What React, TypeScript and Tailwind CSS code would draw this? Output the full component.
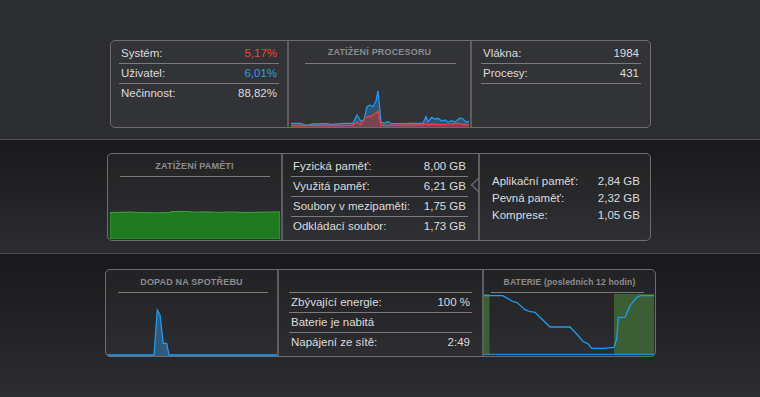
import type { ReactNode } from "react";

type RowData = { label: string; value?: string; tone?: string };

const cpuBlue: [number, number][] = [
  [0, 34.3], [9, 34.3], [15.7, 36.3], [22, 35], [35.7, 34.7], [41, 35.3], [52, 34.3], [62, 34.3],
  [66, 26], [69.7, 32], [73, 31], [76, 17.7], [79, 16], [82, 17.7], [85, 12], [87, 2], [90, 33],
  [93, 34.3], [96.7, 32.7], [100, 34.3], [109, 34.7], [122, 34.3], [132, 34.3], [135, 27.7],
  [137, 33], [140.7, 28.3], [144, 30], [147, 29.3], [150.7, 32], [154, 31], [157, 33], [160.7, 31.7],
  [164, 33], [169, 29], [172, 30], [175, 33], [178, 32.3],
];

const cpuRed: [number, number][] = [
  [0, 36.5], [30, 36.5], [62, 36.3], [66, 33], [69.7, 35.7], [74, 28.7], [80.7, 27], [87, 22.3],
  [90, 36.3], [132, 36], [135, 34.3], [137, 36], [140.7, 35], [150, 35.7], [169, 34.3], [172, 35.5],
  [178, 35.5],
];

const memTop: [number, number][] = [
  [0, 1.5], [12, 1.3], [20, 1], [30, 1.6], [45, 1.8], [58, 1.7], [62, 0.6], [75, 0.4], [85, 1.2],
  [95, 0.8], [110, 1.4], [120, 0.9], [135, 1.6], [150, 1.2], [170, 0.9],
];

const power: [number, number][] = [
  [0, 59], [47, 59], [50.3, 14], [53, 19], [56.3, 47.3], [59.7, 47.3], [62, 59], [170, 59],
];

const battery: [number, number][] = [
  [0, 1.7], [18.7, 1.7], [29.3, 7.7], [32.7, 8.3], [41, 15.7], [45.3, 17.3], [51, 18.3], [56, 23.3],
  [66, 33], [86, 33], [92.7, 40], [99.3, 47.7], [104.3, 50], [107.7, 54.3], [119.3, 54.3],
  [130, 53.3], [132.7, 45], [134.3, 23.3], [141, 23.3], [146, 11.7], [152.7, 3.3], [156.7, 1.7],
  [170, 1.7],
];

const pts = (p: [number, number][]) => p.map(([x, y]) => `${x},${y}`).join(" ");
const area = (p: [number, number][], base: number) =>
  `M${p[0][0]},${base} L${pts(p).replace(/ /g, " L")} L${p[p.length - 1][0]},${base} Z`;

function Row({ label, value, tone, last }: RowData & { last?: boolean }) {
  return (
    <div
      className={`flex h-[20px] items-center justify-between ${last ? "" : "border-b border-[#7b7b7e]"}`}
    >
      <span className="pl-[2px]">{label}</span>
      {value && <span className={`pr-[2px] ${tone ?? ""}`}>{value}</span>}
    </div>
  );
}

function Title({ children, small }: { children: ReactNode; small?: boolean }) {
  return (
    <div
      className={`text-center font-bold leading-[10px] text-[#8c8c8f] ${
        small ? "text-[8.5px] tracking-[0.02em]" : "text-[9px] tracking-[0.02em]"
      }`}
    >
      {children}
    </div>
  );
}

function Divider() {
  return <div className="w-[2px] shrink-0 bg-[#5e5e61]" />;
}

function Panel({ className, children }: { className: string; children: ReactNode }) {
  return (
    <div
      className={`flex h-[88px] overflow-hidden rounded-[5px] border border-[#6d6d70] bg-white/[0.03] ${className}`}
    >
      {children}
    </div>
  );
}

export default function App() {
  return (
    <div className="flex h-[397px] w-[760px] flex-col overflow-hidden bg-[#2c2d31] font-[family-name:'Liberation_Sans',Arial,sans-serif] text-[11.5px] text-[#dcdcdc]">
      {/* CPU */}
      <section className="h-[140px] shrink-0 border-b border-[#505055] bg-[#2c2d31] pt-[40px]">
        <Panel className="ml-[110px] w-[541px]">
          <div className="w-[176px] shrink-0 px-[8px] pt-[3px]">
            <Row label="Systém:" value="5,17%" tone="text-[#f0443a]" />
            <Row label="Uživatel:" value="6,01%" tone="text-[#2a9ef0]" />
            <Row label="Nečinnost:" value="88,82%" last />
          </div>
          <Divider />
          <div className="flex w-[181px] shrink-0 flex-col pt-[6px]">
            <Title>ZATÍŽENÍ PROCESORU</Title>
            <div className="ml-[16px] mr-[14px] mt-[6px] h-px bg-[#7b7b7e]" />
            <svg className="mt-auto ml-[2px]" width="178" height="38" viewBox="0 0 178 38">
              <path d={area(cpuBlue, 38)} fill="#2f5a7c" fillOpacity="0.9" />
              <path d={area(cpuRed, 38)} fill="#7c4352" />
              <polyline points={pts(cpuBlue)} fill="none" stroke="#1f9bf0" strokeWidth="1.3" />
              <polyline points={pts(cpuRed)} fill="none" stroke="#f0403a" strokeWidth="1.3" />
            </svg>
          </div>
          <Divider />
          <div className="flex-1 px-[9px] pt-[3px]">
            <Row label="Vlákna:" value="1984" />
            <Row label="Procesy:" value="431" />
          </div>
        </Panel>
      </section>

      {/* Memory */}
      <section className="h-[114px] shrink-0 border-b border-[#505055] bg-gradient-to-b from-[#19191b] to-[#2c2d31] pt-[13px]">
        <Panel className="ml-[107px] w-[544px]">
          <div className="flex w-[173px] shrink-0 flex-col pt-[7px]">
            <Title>ZATÍŽENÍ PAMĚTI</Title>
            <div className="ml-[12px] mr-[11px] mt-[5px] h-px bg-[#7b7b7e]" />
            <svg className="mb-px ml-[2px] mt-auto" width="170" height="28" viewBox="0 0 170 28">
              <path d={area(memTop, 28)} fill="#1f7a1f" stroke="#3aa53a" strokeWidth="1" />
            </svg>
          </div>
          <Divider />
          <div className="w-[195px] shrink-0 pl-[6px] pr-[10px] pt-[3px]">
            <div className="pl-[2px]">
              <Row label="Fyzická paměť:" value="8,00 GB" />
              <Row label="Využitá paměť:" value="6,21 GB" />
              <Row label="Soubory v mezipaměti:" value="1,75 GB" />
              <Row label="Odkládací soubor:" value="1,73 GB" last />
            </div>
          </div>
          <div className="relative w-[2px] shrink-0 bg-[#5e5e61]">
            <svg className="absolute left-[-8px] top-[24px]" width="10" height="14" viewBox="0 0 10 14">
              <polyline points="8.5,0.5 1.5,7 8.5,13.5" fill="none" stroke="#66666a" strokeWidth="1.5" />
            </svg>
          </div>
          <div className="flex flex-1 flex-col justify-center pl-[12px] pr-[10px] pt-[2px] leading-[17px]">
            <div className="flex justify-between">
              <span>Aplikační paměť:</span>
              <span>2,84 GB</span>
            </div>
            <div className="flex justify-between">
              <span>Pevná paměť:</span>
              <span>2,32 GB</span>
            </div>
            <div className="flex justify-between">
              <span>Komprese:</span>
              <span>1,05 GB</span>
            </div>
          </div>
        </Panel>
      </section>

      {/* Energy */}
      <section className="flex-1 bg-gradient-to-b from-[#19191b] to-[#2c2d31] pt-[15px]">
        <Panel className="ml-[105px] w-[551px]">
          <div className="flex w-[171px] shrink-0 flex-col pt-[7px]">
            <Title>DOPAD NA SPOTŘEBU</Title>
            <div className="ml-[12px] mr-[9px] mt-[5px] h-px bg-[#7b7b7e]" />
            <svg className="ml-px mt-auto" width="170" height="60" viewBox="0 0 170 60">
              <path d={area(power, 60)} fill="#2f5a7c" />
              <polyline points={pts(power)} fill="none" stroke="#1f9bf0" strokeWidth="1.3" />
            </svg>
          </div>
          <Divider />
          <div className="w-[203px] shrink-0 px-[10px] pt-[22px]">
            <div className="border-t border-[#7b7b7e]">
              <Row label="Zbývající energie:" value="100 %" />
              <Row label="Baterie je nabitá" />
              <Row label="Napájení ze sítě:" value="2:49" last />
            </div>
          </div>
          <Divider />
          <div className="flex flex-1 flex-col pt-[7px]">
            <Title small>BATERIE (posledních 12 hodin)</Title>
            <div className="ml-[7px] mr-[11px] mt-[5px] h-px bg-[#7b7b7e]" />
            <svg className="mt-[1px]" width="170" height="61" viewBox="0 0 170 61">
              <rect x="0" y="0" width="5.5" height="61" fill="#3b5e34" />
              <rect x="130" y="0" width="40" height="61" fill="#3b5e34" />
              <line x1="0" y1="60.3" x2="170" y2="60.3" stroke="#1f9bf0" strokeWidth="1" />
              <polyline points={pts(battery)} fill="none" stroke="#1f9bf0" strokeWidth="1.3" />
            </svg>
          </div>
        </Panel>
      </section>
    </div>
  );
}
